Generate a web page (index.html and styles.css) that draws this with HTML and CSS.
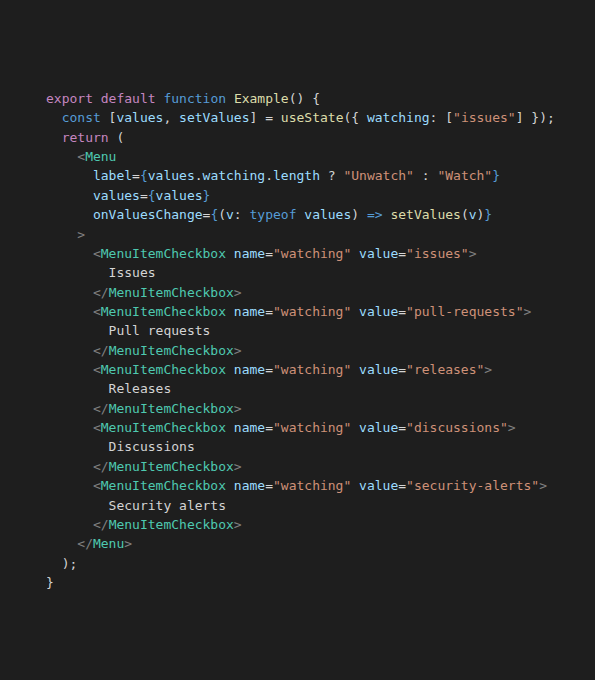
FILE: index.html
```html
<!DOCTYPE html>
<html>
<head>
<meta charset="utf-8">
<link rel="stylesheet" href="styles.css">
</head>
<body>
<main class="page">
<pre class="code"><span class="kw">export</span> <span class="kw">default</span> <span class="st">function</span> <span class="fn">Example</span>() {
  <span class="st">const</span> [<span class="var">values</span>, <span class="var">setValues</span>] = <span class="fn">useState</span>({ <span class="var">watching</span>: [<span class="str">"issues"</span>] });
  <span class="kw">return</span> (
    <span class="pn">&lt;</span><span class="tag">Menu</span>
      <span class="var">label</span>=<span class="st">{</span><span class="var">values</span>.<span class="var">watching</span>.<span class="var">length</span> ? <span class="str">"Unwatch"</span> : <span class="str">"Watch"</span><span class="st">}</span>
      <span class="var">values</span>=<span class="st">{</span><span class="var">values</span><span class="st">}</span>
      <span class="var">onValuesChange</span>=<span class="st">{</span>(<span class="var">v</span>: <span class="st">typeof</span> <span class="var">values</span>) <span class="st">=&gt;</span> <span class="fn">setValues</span>(<span class="var">v</span>)<span class="st">}</span>
    <span class="pn">&gt;</span>
      <span class="pn">&lt;</span><span class="tag">MenuItemCheckbox</span> <span class="var">name</span>=<span class="str">"watching"</span> <span class="var">value</span>=<span class="str">"issues"</span><span class="pn">&gt;</span>
        Issues
      <span class="pn">&lt;/</span><span class="tag">MenuItemCheckbox</span><span class="pn">&gt;</span>
      <span class="pn">&lt;</span><span class="tag">MenuItemCheckbox</span> <span class="var">name</span>=<span class="str">"watching"</span> <span class="var">value</span>=<span class="str">"pull-requests"</span><span class="pn">&gt;</span>
        Pull requests
      <span class="pn">&lt;/</span><span class="tag">MenuItemCheckbox</span><span class="pn">&gt;</span>
      <span class="pn">&lt;</span><span class="tag">MenuItemCheckbox</span> <span class="var">name</span>=<span class="str">"watching"</span> <span class="var">value</span>=<span class="str">"releases"</span><span class="pn">&gt;</span>
        Releases
      <span class="pn">&lt;/</span><span class="tag">MenuItemCheckbox</span><span class="pn">&gt;</span>
      <span class="pn">&lt;</span><span class="tag">MenuItemCheckbox</span> <span class="var">name</span>=<span class="str">"watching"</span> <span class="var">value</span>=<span class="str">"discussions"</span><span class="pn">&gt;</span>
        Discussions
      <span class="pn">&lt;/</span><span class="tag">MenuItemCheckbox</span><span class="pn">&gt;</span>
      <span class="pn">&lt;</span><span class="tag">MenuItemCheckbox</span> <span class="var">name</span>=<span class="str">"watching"</span> <span class="var">value</span>=<span class="str">"security-alerts"</span><span class="pn">&gt;</span>
        Security alerts
      <span class="pn">&lt;/</span><span class="tag">MenuItemCheckbox</span><span class="pn">&gt;</span>
    <span class="pn">&lt;/</span><span class="tag">Menu</span><span class="pn">&gt;</span>
  );
}</pre>
</main>
</body>
</html>
```

FILE: styles.css
```css
html, body {
  margin: 0;
  padding: 0;
  background: #1e1e1e;
}
.page {
  width: 595px;
  height: 680px;
  box-sizing: border-box;
  padding: 89px 0 0 46px;
  background: #1e1e1e;
}
.code {
  margin: 0;
  font-family: "DejaVu Sans Mono", "Liberation Mono", monospace;
  font-size: 13px;
  line-height: 19.36px;
  color: #d4d4d4;
  white-space: pre;
}
.kw { color: #c586c0; }
.st { color: #569cd6; }
.fn { color: #dcdcaa; }
.var { color: #9cdcfe; }
.str { color: #ce9178; }
.tag { color: #4ec9b0; }
.pn { color: #808080; }
```
